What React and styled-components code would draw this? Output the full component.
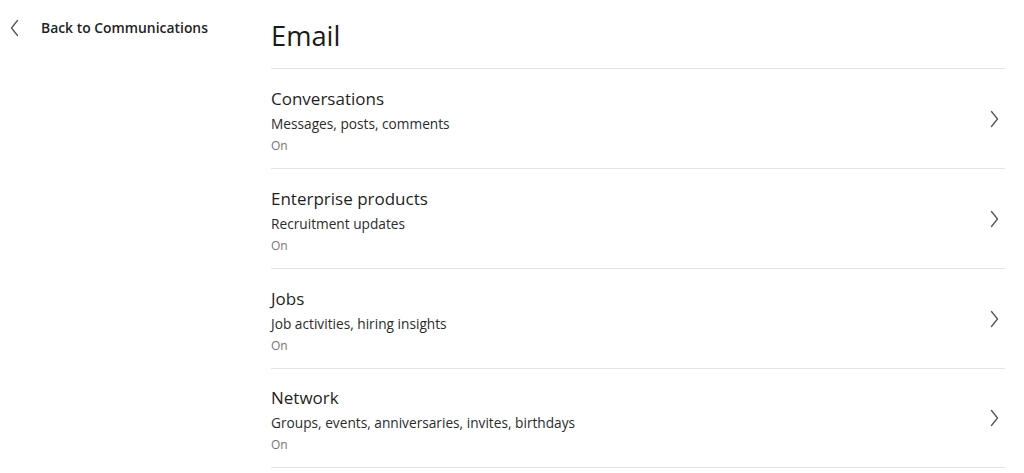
import React from "react";
import styled, { createGlobalStyle } from "styled-components";

const Global = createGlobalStyle`
  body {
    margin: 0;
    background: #fff;
    font-family: "Open Sans", "Noto Sans", sans-serif;
    color: #1f1f1f;
  }
`;

const Page = styled.div`
  display: flex;
  width: 1024px;
  height: 473px;
  overflow: hidden;
`;

const Sidebar = styled.div`
  width: 271px;
  flex-shrink: 0;
  padding: 18px 0 0 10px;
  box-sizing: border-box;
`;

const BackLink = styled.a`
  display: flex;
  align-items: center;
  gap: 22px;
  color: #1f1f1f;
  font-size: 13.9px;
  font-weight: 600;
  text-decoration: none;
  cursor: pointer;
`;

const Main = styled.div`
  flex: 1;
  padding-right: 19px;
`;

const Title = styled.h1`
  margin: 0;
  height: 68px;
  box-sizing: border-box;
  padding-top: 16px;
  font-size: 27.3px;
  font-weight: 400;
  line-height: 40px;
  color: #1a1a1a;
`;

const Row = styled.div`
  display: flex;
  align-items: center;
  height: 100px;
  box-sizing: border-box;
  border-top: 1px solid #e3e3e3;
  border-bottom: ${({ last }) => (last ? "1px solid #e3e3e3" : "none")};
  cursor: pointer;
`;

const RowText = styled.div`
  flex: 1;
  display: flex;
  flex-direction: column;
  padding-top: 4px;
`;

const RowTitle = styled.div`
  font-size: 17px;
  line-height: 24px;
  color: #1f1f1f;
`;

const RowSub = styled.div`
  font-size: 13.7px;
  line-height: 20px;
  margin-top: 3px;
  color: #2b2b2b;
`;

const RowStatus = styled.div`
  font-size: 12px;
  line-height: 18px;
  margin-top: 3px;
  color: #767676;
`;

const Chevron = ({ dir }) => (
  <svg width="9" height="18" viewBox="0 0 9 18" fill="none">
    <path
      d={dir === "left" ? "M7.5 1.5 L1.5 9 L7.5 16.5" : "M1.5 1.5 L7.5 9 L1.5 16.5"}
      stroke="#555"
      strokeWidth="1.3"
      strokeLinecap="round"
      strokeLinejoin="round"
    />
  </svg>
);

const ChevronWrap = styled.div`
  width: 9px;
  margin-right: 6px;
  display: flex;
`;

const items = [
  { title: "Conversations", sub: "Messages, posts, comments" },
  { title: "Enterprise products", sub: "Recruitment updates" },
  { title: "Jobs", sub: "Job activities, hiring insights" },
  { title: "Network", sub: "Groups, events, anniversaries, invites, birthdays" },
];

export default function App() {
  return (
    <>
      <Global />
      <Page>
        <Sidebar>
          <BackLink>
            <Chevron dir="left" />
            Back to Communications
          </BackLink>
        </Sidebar>
        <Main>
          <Title>Email</Title>
          {items.map((it, i) => (
            <Row key={it.title} last={i === items.length - 1}>
              <RowText>
                <RowTitle>{it.title}</RowTitle>
                <RowSub>{it.sub}</RowSub>
                <RowStatus>On</RowStatus>
              </RowText>
              <ChevronWrap>
                <Chevron dir="right" />
              </ChevronWrap>
            </Row>
          ))}
        </Main>
      </Page>
    </>
  );
}
